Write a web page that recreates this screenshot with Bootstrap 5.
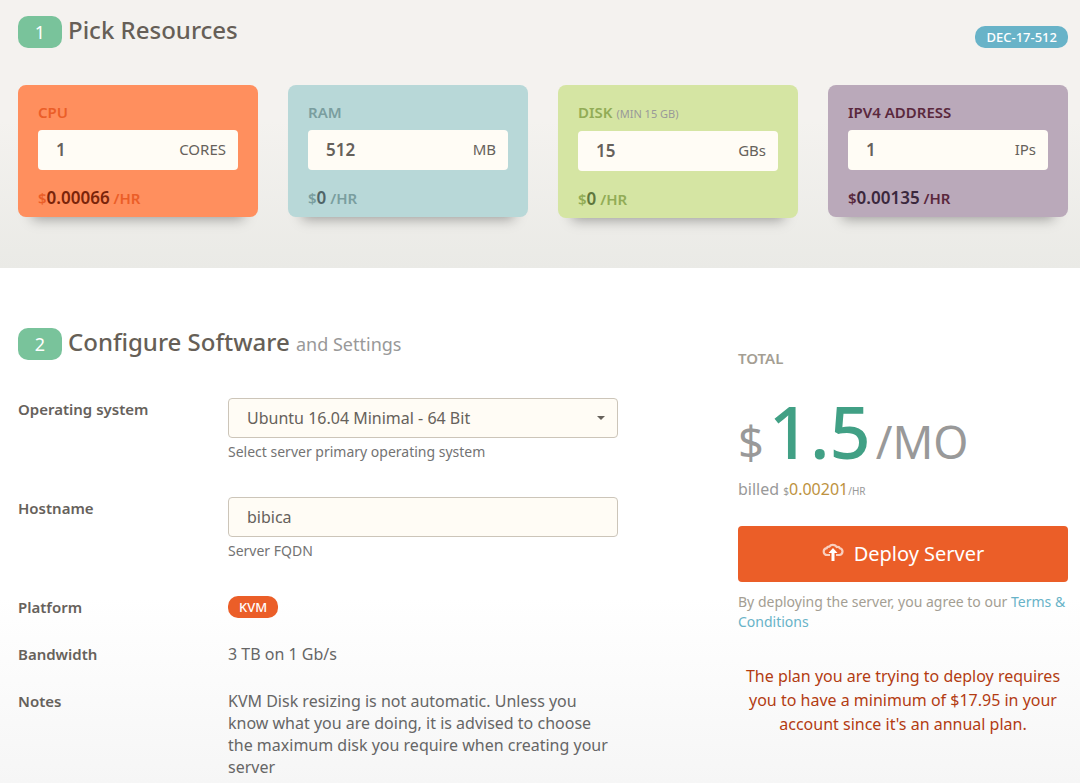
<!DOCTYPE html>
<html lang="en">
<head>
<meta charset="utf-8">
<meta name="viewport" content="width=device-width, initial-scale=1">
<title>Deploy a server</title>
<link href="https://cdn.jsdelivr.net/npm/bootstrap@5.3.0/dist/css/bootstrap.min.css" rel="stylesheet">
<style>
  body {
    font-family: "Noto Sans", "Open Sans", sans-serif;
    font-size: 16px;
    line-height: 22px;
    color: #666;
    overflow-x: hidden;
  }
  .page-pad { padding-left: 18px; padding-right: 12px; }
  .wide-row { --bs-gutter-x: 30px; }

  .resources {
    background: linear-gradient(#f4f2ef 45%, #eaeae6);
    padding-top: 16px;
    padding-bottom: 50px;
  }
  .resources-head { margin-bottom: 37px; }
  .software {
    background: linear-gradient(#fff 330px, #f6f6f6 515px);
    padding-top: 60px;
    padding-bottom: 5px;
  }

  .step-title {
    font-size: 24px;
    line-height: 28px;
    font-weight: 500;
    color: #665f57;
    gap: 6px;
  }
  .step-title .subtitle { font-size: 18px; font-weight: 400; color: #999; }
  .step-no {
    width: 44px;
    font-size: 18px;
    line-height: 32px;
    font-weight: 400;
    text-align: center;
    color: #fff;
    background: #79c39b;
    border-radius: 10px;
  }
  .tag {
    padding: 0 11px;
    font-size: 13px;
    line-height: 22px;
    font-weight: 500;
    color: #fff;
    border-radius: 10px;
  }
  .tag-plan { background: #68b3c8; margin-top: 10px; }
  .tag-kvm { background: #eb5e28; }

  .resource {
    padding: 17px 20px 7px;
    border-radius: 8px;
    box-shadow: 0 16px 12px -14px rgba(0, 0, 0, .35);
  }
  .resource label, .total-label { font-size: 15px; line-height: 20px; font-weight: 600; }
  .resource label { display: block; margin-bottom: 8px; }
  .resource label small { font-size: 11px; line-height: 1; font-weight: 400; color: #999; }
  .resource .form-control, .resource .input-group-text {
    height: 40px;
    border: 0;
    border-radius: 4px;
    background: #fffcf5;
    color: #66615b;
  }
  .resource .form-control { padding: 0 0 2px 18px; font-size: 17px; font-weight: 600; }
  .resource .input-group-text { padding: 0 12px 2px; font-size: 15px; }
  .rate { margin: 16px 0 0; font-size: 15px; line-height: 24px; font-weight: 600; }
  .rate b { font-size: 17px; font-weight: 600; }
  .cpu { background: #ff8f5e; color: #eb5e28; }
  .cpu b { color: #7a240a; }
  .ram { background: #b8d8d8; color: #7a9e9f; }
  .ram b { color: #506568; }
  .disk { background: #d5e5a3; color: #92ac56; }
  .disk label { line-height: 21px; }
  .disk b { color: #60773d; }
  .ipv4 { background: #baa9ba; color: #5a283d; }
  .ipv4 b { color: #3a283d; }

  .field-name { font-size: 15px; line-height: 22px; font-weight: 600; color: #66615b; }
  .server-form { margin-top: 34px; }
  .field-input {
    height: 40px;
    padding: 0 18px;
    font-size: 16px;
    color: #66615b;
    background-color: #fffcf5;
    border: 1px solid #ccc5b9;
    border-radius: 4px;
  }
  .form-select.field-input {
    background-image: url("data:image/svg+xml,%3Csvg xmlns='http://www.w3.org/2000/svg' viewBox='0 0 8 4'%3E%3Cpath fill='%2366615b' d='M0 0h8L4 4z'/%3E%3C/svg%3E");
    background-size: 8px 4px;
    background-position: right 12px center;
  }
  .hint { font-size: 14px; line-height: 20px; margin-top: 4px; color: #737373; }
  .row-tall { margin-bottom: 35px; }
  .row-short { margin-bottom: 25px; }

  .summary { padding-top: 20px; color: #999; }
  .total-label { color: #a49e93; }
  .monthly { margin-top: 27px; font-size: 45px; line-height: 72px; }
  .monthly b { margin: 0 5px; font-size: 72px; font-weight: 500; color: #41a085; }
  .billed { font-size: 16px; line-height: 22px; }
  .billed small { font-size: 10px; line-height: 1; }
  .billed span { color: #bd9240; }
  .deploy {
    height: 56px;
    margin: 26px 0 10px;
    font-size: 20px;
    color: #fff;
    background: #eb5e28;
    border: 0;
    border-radius: 4px;
    gap: 10px;
  }
  .deploy:hover { color: #fff; background: #d9531f; }
  .terms { font-size: 14px; line-height: 20px; color: #a49e93; margin: 0; }
  .terms a { color: #68b3c8; text-decoration: none; }
  .alert-note { margin: 32px 0 0; line-height: 24px; text-align: center; color: #b33c12; }
</style>
</head>
<body>
<section class="resources page-pad">
  <div class="resources-head d-flex justify-content-between align-items-start">
    <h2 class="step-title d-flex align-items-start mb-0"><span class="step-no">1</span><span>Pick Resources</span></h2>
    <span class="tag tag-plan">DEC-17-512</span>
  </div>
  <div class="row wide-row align-items-start">
    <div class="col-3">
      <div class="resource cpu">
        <label for="cpu">CPU</label>
        <div class="input-group"><input class="form-control" id="cpu" type="text" value="1"><span class="input-group-text">CORES</span></div>
        <p class="rate">$<b>0.00066</b> /HR</p>
      </div>
    </div>
    <div class="col-3">
      <div class="resource ram">
        <label for="ram">RAM</label>
        <div class="input-group"><input class="form-control" id="ram" type="text" value="512"><span class="input-group-text">MB</span></div>
        <p class="rate">$<b>0</b> /HR</p>
      </div>
    </div>
    <div class="col-3">
      <div class="resource disk">
        <label for="disk">DISK <small>(MIN 15 GB)</small></label>
        <div class="input-group"><input class="form-control" id="disk" type="text" value="15"><span class="input-group-text">GBs</span></div>
        <p class="rate">$<b>0</b> /HR</p>
      </div>
    </div>
    <div class="col-3">
      <div class="resource ipv4">
        <label for="ips">IPV4 ADDRESS</label>
        <div class="input-group"><input class="form-control" id="ips" type="text" value="1"><span class="input-group-text">IPs</span></div>
        <p class="rate">$<b>0.00135</b> /HR</p>
      </div>
    </div>
  </div>
</section>

<section class="software page-pad">
  <div class="row wide-row">
    <div class="col-7">
      <h2 class="step-title d-flex align-items-start mb-0 pb-1"><span class="step-no">2</span><span class="text-nowrap">Configure Software <span class="subtitle">and Settings</span></span></h2>
      <form class="server-form" id="server-form">
        <div class="row wide-row row-tall">
          <label class="col-4 field-name" for="os">Operating system</label>
          <div class="col-8">
            <select class="form-select field-input" id="os"><option>Ubuntu 16.04 Minimal - 64 Bit</option></select>
            <div class="hint">Select server primary operating system</div>
          </div>
        </div>
        <div class="row wide-row row-tall">
          <label class="col-4 field-name" for="host">Hostname</label>
          <div class="col-8">
            <input class="form-control field-input" id="host" type="text" value="bibica">
            <div class="hint">Server FQDN</div>
          </div>
        </div>
        <div class="row wide-row row-short">
          <div class="col-4 field-name">Platform</div>
          <div class="col-8 d-flex"><span class="tag tag-kvm">KVM</span></div>
        </div>
        <div class="row wide-row row-short">
          <div class="col-4 field-name">Bandwidth</div>
          <div class="col-8">3 TB on 1 Gb/s</div>
        </div>
        <div class="row wide-row">
          <div class="col-4 field-name">Notes</div>
          <div class="col-8">KVM Disk resizing is not automatic. Unless you know what you are doing, it is advised to choose the maximum disk you require when creating your server</div>
        </div>
      </form>
    </div>
    <div class="col-4 offset-1">
      <div class="summary">
        <div class="total-label">TOTAL</div>
        <div class="monthly">$<b>1.5</b>/MO</div>
        <div class="billed">billed <small>$</small><span>0.00201</span><small>/HR</small></div>
        <button class="btn deploy w-100 d-flex align-items-center justify-content-center" type="submit" form="server-form">
          <svg width="22" height="22" viewBox="0 0 22 22" fill="none" aria-hidden="true">
            <path d="M8 12H5.200A3.300 3.300 0 0 1 1.700 8.700Q1.700 5.800 4.700 5.200 5.200 3.500 7.400 3.700 8.700 1.600 11.300 1.900q2.300.2 3.400 2.100 2.500-.7 3.200 1.300 2.600.6 2.600 3.300-.2 3-3.300 3.400H14" stroke="#fff" stroke-opacity=".7" stroke-width="2.200"/>
            <path d="M11 5l4.500 5h-3v8h-3v-8h-3z" fill="#fff"/>
          </svg>
          <span>Deploy Server</span>
        </button>
        <p class="terms">By deploying the server, you agree to our <a href="#terms">Terms &amp; Conditions</a></p>
        <p class="alert-note">The plan you are trying to deploy requires you to have a minimum of $17.95 in your account since it's an annual plan.</p>
      </div>
    </div>
  </div>
</section>
<script src="https://cdn.jsdelivr.net/npm/bootstrap@5.3.0/dist/js/bootstrap.bundle.min.js"></script>
</body>
</html>
